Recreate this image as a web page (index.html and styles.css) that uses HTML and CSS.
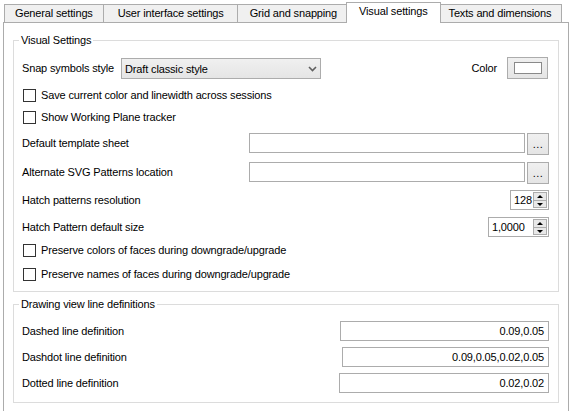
FILE: index.html
```html
<!DOCTYPE html>
<html>
<head>
<meta charset="utf-8">
<link rel="stylesheet" href="styles.css">
</head>
<body>
<div class="tabs">
  <div class="tab">General settings</div>
  <div class="tab wide2">User interface settings</div>
  <div class="tab wide3">Grid and snapping</div>
  <div class="tab selected">Visual settings</div>
  <div class="tab">Texts and dimensions</div>
</div>
<div class="panel">
  <fieldset class="group g1">
    <legend>Visual Settings</legend>
    <div class="row r1">
      <span class="label">Snap symbols style</span>
      <div class="combo"><span>Draft classic style</span>
        <svg class="chev" width="9" height="6" viewBox="0 0 9 6"><path d="M1 1 L4.5 4.5 L8 1" fill="none" stroke="#606060" stroke-width="1.6"/></svg>
      </div>
      <span class="grow"></span>
      <span class="label">Color</span>
      <div class="colorbtn"><span class="swatch"></span></div>
    </div>
    <div class="row r2"><span class="cb"></span><span class="label">Save current color and linewidth across sessions</span></div>
    <div class="row r3"><span class="cb"></span><span class="label">Show Working Plane tracker</span></div>
    <div class="row r4 top">
      <span class="label lab-mid">Default template sheet</span>
      <span class="grow"></span>
      <div class="input path"></div>
      <div class="dots">...</div>
    </div>
    <div class="row r5 top">
      <span class="label lab-mid">Alternate SVG Patterns location</span>
      <span class="grow"></span>
      <div class="input path"></div>
      <div class="dots">...</div>
    </div>
    <div class="row r6">
      <span class="label">Hatch patterns resolution</span>
      <span class="grow"></span>
      <div class="spin s1"><span class="val">128</span><span class="arrows"><span class="up"></span><span class="down"></span></span></div>
    </div>
    <div class="row r7">
      <span class="label">Hatch Pattern default size</span>
      <span class="grow"></span>
      <div class="spin s2"><span class="val">1,0000</span><span class="arrows"><span class="up"></span><span class="down"></span></span></div>
    </div>
    <div class="row r8"><span class="cb"></span><span class="label">Preserve colors of faces during downgrade/upgrade</span></div>
    <div class="row r9"><span class="cb"></span><span class="label">Preserve names of faces during downgrade/upgrade</span></div>
  </fieldset>
  <fieldset class="group g2">
    <legend>Drawing view line definitions</legend>
    <div class="row2">
      <span class="label">Dashed line definition</span>
      <span class="grow"></span>
      <div class="input num w1">0.09,0.05</div>
    </div>
    <div class="row2">
      <span class="label">Dashdot line definition</span>
      <span class="grow"></span>
      <div class="input num w2">0.09,0.05,0.02,0.05</div>
    </div>
    <div class="row2">
      <span class="label">Dotted line definition</span>
      <span class="grow"></span>
      <div class="input num w3">0.02,0.02</div>
    </div>
  </fieldset>
</div>
</body>
</html>
```
FILE: styles.css
```css
html, body {
  margin: 0;
  padding: 0;
  background: #ffffff;
  overflow: hidden;
}
body {
  width: 572px;
  height: 411px;
  font-family: "Liberation Sans", Arial, sans-serif;
  font-size: 11px;
  letter-spacing: -0.15px;
  color: #000;
}
* { box-sizing: border-box; }

.tabs {
  display: flex;
  align-items: flex-end;
  height: 22px;
  padding-left: 4px;
}
.tab {
  height: 18px;
  line-height: 17px;
  padding: 0 10px;
  border: 1px solid #acacac;
  border-bottom: 0;
  background: #f0f0f0;
  margin-left: -1px;
  white-space: nowrap;
}
.tab:first-child { margin-left: 0; }
.tab.wide2 { padding: 0 13px 0 14px; }
.tab.wide3 { padding: 0 11px 0 12px; }
.tab.selected {
  height: 21px;
  line-height: 17px;
  margin-bottom: -1px;
  margin-left: -3px;
  margin-right: -2px;
  padding: 0 12px;
  background: #ffffff;
  position: relative;
  z-index: 2;
}

.panel {
  margin-left: 3px;
  width: 566px;
  height: 420px;
  border: 1px solid #acacac;
  background: #ffffff;
  padding: 0 9px;
  position: relative;
  z-index: 1;
}

.group {
  margin: 0;
  border: 1px solid #dcdcdc;
  min-width: 0;
}
.group legend {
  padding: 0 2px;
  margin-left: -3px;
  line-height: 13px;
  height: 13px;
}
.g1 {
  margin-top: 11px;
  padding: 10px 9px 6px 8px;
}
.g2 {
  margin-top: 6px;
  padding: 10px 9px 9px 8px;
}

.row {
  display: flex;
  align-items: center;
  height: 22px;
}
.row.top { align-items: flex-start; }
.r2 { margin-top: 5px; }
.r3 { margin-top: 0; }
.r4 { margin-top: 5px; }
.r5 { margin-top: 7px; }
.r6 { margin-top: 5px; }
.r7 { margin-top: 5px; }
.r8 { margin-top: 1px; }
.r9 { margin-top: 2px; }

.label { white-space: nowrap; }
.lab-mid { line-height: 20px; }
.grow { flex: 1; }

.combo {
  width: 200px;
  height: 21px;
  margin-left: 7px;
  align-self: flex-start;
  margin-top: 1px;
  border: 1px solid #acacac;
  background: linear-gradient(#f0f0f0, #e5e5e5);
  display: flex;
  align-items: center;
  padding-left: 3px;
  padding-right: 3px;
}
.combo span { flex: 1; }
.chev { display: block; margin-right: 0; }

.colorbtn {
  width: 41px;
  height: 22px;
  margin-left: 10px;
  margin-right: 1px;
  border: 1px solid #acacac;
  background: linear-gradient(#f0f0f0, #e5e5e5);
  display: flex;
  align-items: center;
  justify-content: center;
}
.swatch {
  width: 28px;
  height: 12px;
  border: 1px solid #8a8a8a;
  background: #ffffff;
  margin-top: -1px;
}

.cb {
  width: 13px;
  height: 13px;
  border: 1px solid #333333;
  background: #ffffff;
  margin-left: 1px;
  margin-right: 5px;
  flex: none;
}

.input {
  height: 20px;
  border: 1px solid #acacac;
  background: #ffffff;
  flex: none;
}
.path { width: 276px; }
.dots {
  width: 22px;
  height: 22px;
  margin-left: 2px;
  border: 1px solid #acacac;
  background: linear-gradient(#f0f0f0, #e5e5e5);
  text-align: center;
  line-height: 20px;
  letter-spacing: 0.5px;
  flex: none;
}

.spin {
  height: 20px;
  border: 1px solid #acacac;
  display: flex;
  align-items: center;
  padding-left: 3px;
  padding-right: 1px;
  flex: none;
}
.s1 { width: 39px; }
.s2 { width: 61px; }
.spin .val { flex: 1; }
.arrows {
  width: 14px;
  height: 16px;
  display: flex;
  flex-direction: column;
}
.arrows span {
  flex: 1;
  border: 1px solid #acacac;
  background: #e8e8e8;
  position: relative;
}
.arrows .down { border-top: 0; }
.arrows .up::after, .arrows .down::after {
  content: "";
  position: absolute;
  left: 3px;
  width: 0;
  height: 0;
  border-left: 3px solid transparent;
  border-right: 3px solid transparent;
}
.arrows .up::after { top: 2px; border-bottom: 3px solid #000; }
.arrows .down::after { top: 2px; border-top: 3px solid #000; }

.row2 {
  display: flex;
  align-items: center;
  height: 20px;
}
.row2 + .row2 { margin-top: 6px; }
.num {
  text-align: right;
  padding-right: 4px;
  line-height: 18px;
}
.w1 { width: 209px; }
.w2 { width: 207px; }
.w3 { width: 210px; }
```
